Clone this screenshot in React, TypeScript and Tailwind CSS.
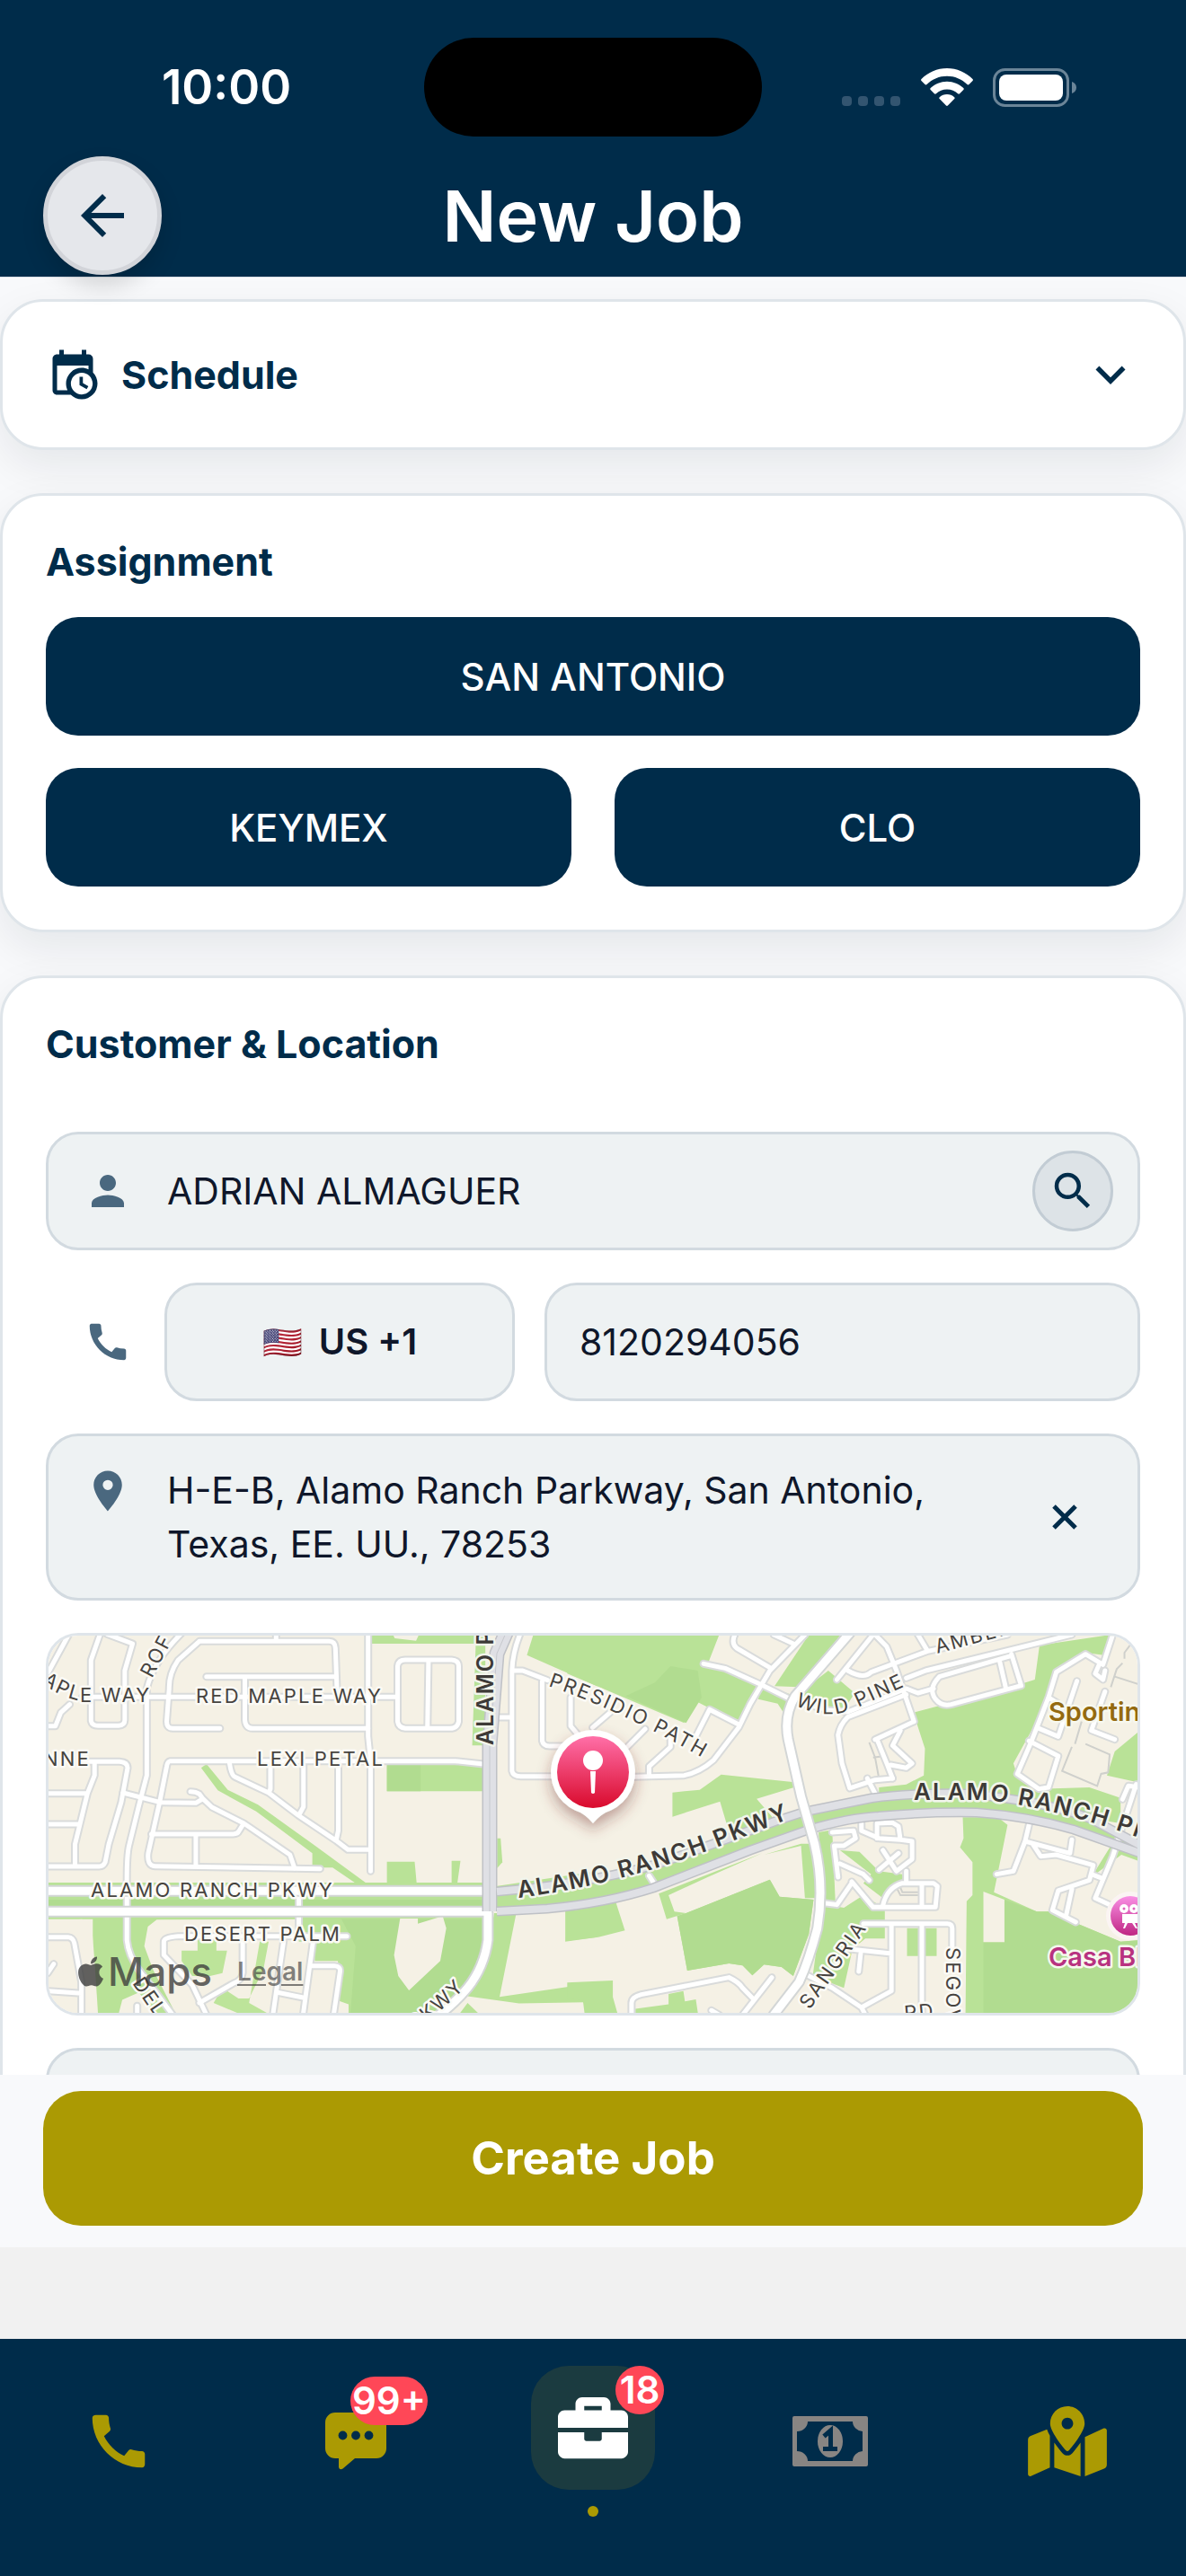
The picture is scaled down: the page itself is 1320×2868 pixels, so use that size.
import { useState } from 'react';
import { FaApple, FaBriefcase, FaMapMarkedAlt } from 'react-icons/fa';
import { MdArrowBack, MdCall, MdExpandMore, MdPerson, MdPlace, MdSearch } from 'react-icons/md';

const TEAMS = ['KEYMEX', 'CLO'];

const CARD = 'rounded-[48px] border-3 border-[#dfe5ea] bg-white shadow-[0_18px_48px_rgba(15,23,42,0.08)]';
const FIELD = 'rounded-[36px] border-3 border-[#d2dae0] bg-[#eef2f3] text-[#0f172a]';

function SignalDots() {
  return (
    <svg className="w-[66px] h-[12px]" viewBox="0 0 66 12" fill="#335570" aria-hidden="true">
      {[0, 18, 36, 54].map((x) => (
        <rect key={x} x={x} width="11" height="11" rx="4" />
      ))}
    </svg>
  );
}

function WifiIcon() {
  return (
    <svg className="w-[58px] h-[43px]" viewBox="0 0 58 43" fill="#fff" aria-hidden="true">
      <path d="M29 0c11 0 21 4.500 28.500 12 .6.600.6 1.400 0 2l-4 4c-.6.600-1.400.6-2 0C45.500 12 37.500 8.700 29 8.700S12.500 12 6.500 18c-.6.600-1.400.6-2 0l-4-4c-.6-.600-.6-1.400 0-2C8 4.500 18 0 29 0z" />
      <path d="M29 14.700c7 0 13.500 2.800 18.300 7.400.6.600.6 1.400 0 2l-4.200 4.200c-.6.600-1.400.6-2 0-3.200-3-7.400-4.900-12.100-4.900s-8.900 1.900-12.100 4.900c-.6.600-1.400.6-2 0l-4.200-4.200c-.6-.600-.6-1.400 0-2C15.500 17.500 22 14.700 29 14.700z" />
      <path d="M29 29c3.200 0 6 1.200 8.200 3.200.6.600.6 1.300 0 1.900l-7.300 7.500c-.6.600-1.300.6-1.900 0l-7.300-7.500c-.6-.600-.6-1.300 0-1.900C23 30.200 25.800 29 29 29z" />
    </svg>
  );
}

function BatteryIcon() {
  return (
    <svg className="w-[93px] h-[43px]" viewBox="0 0 93 43" aria-hidden="true">
      <rect x="1.500" y="1.500" width="82" height="40" rx="12" fill="none" stroke="#6b8598" strokeWidth="3" />
      <rect x="7" y="7" width="71" height="29" rx="8" fill="#fff" />
      <path d="M88 15c3 1 5 3.500 5 6.500S91 27 88 28z" fill="#6b8598" />
    </svg>
  );
}

function CalendarClockIcon() {
  return (
    <svg className="size-[60px]" viewBox="0 0 24 24" fill="currentColor" aria-hidden="true">
      <path d="M15,13H16.5V15.82L18.94,17.23L18.19,18.53L15,16.69V13M19,8H5V19H9.67C9.24,18.09 9,17.07 9,16A7,7 0 0,1 16,9C17.07,9 18.09,9.24 19,9.67V8M5,21C3.89,21 3,20.1 3,19V5C3,3.89 3.89,3 5,3H6V1H8V3H16V1H18V3H19A2,2 0 0,1 21,5V11.1C22.24,12.36 23,14.09 23,16A7,7 0 0,1 16,23C14.09,23 12.36,22.24 11.1,21H5M16,11.15A4.85,4.85 0 0,0 11.15,16C11.15,18.68 13.32,20.85 16,20.85A4.85,4.85 0 0,0 20.85,16C20.85,13.32 18.68,11.15 16,11.15Z" />
    </svg>
  );
}

function CloseIcon() {
  return (
    <svg className="size-12" viewBox="0 0 48 48" stroke="currentColor" strokeWidth="5" aria-hidden="true">
      <path d="M12 12L36 36M36 12L12 36" />
    </svg>
  );
}

function ChatIcon() {
  return (
    <svg className="w-[68px] h-[64px]" viewBox="0 0 68 64" fill="#ab9a03" aria-hidden="true">
      <path d="M11 0h46a11 11 0 0 1 11 11v29a11 11 0 0 1-11 11H33L19.500 62.500Q16 64.500 15 61V51H11A11 11 0 0 1 0 40V11A11 11 0 0 1 11 0z" />
      <g fill="#002c4a">
        <circle cx="19.500" cy="25.500" r="4.900" />
        <circle cx="34" cy="25.500" r="4.900" />
        <circle cx="48.500" cy="25.500" r="4.900" />
      </g>
    </svg>
  );
}

function BillIcon() {
  return (
    <svg className="w-[84px] h-[56px]" viewBox="0 0 84 56" aria-hidden="true">
      <path
        fill="#888583"
        fillRule="evenodd"
        d="M2 0H82Q84 0 84 2V54Q84 56 82 56H2Q0 56 0 54V2Q0 0 2 0zM17 6A12 11 0 0 1 5 17V39A12 11 0 0 1 17 50H67A12 11 0 0 1 78 39V17A12 11 0 0 1 67 6z"
      />
      <ellipse cx="42" cy="28" rx="14" ry="18" fill="#888583" />
      <path d="M34 36.500H50M42.500 36V16L35 22.500" fill="none" stroke="#002c4a" strokeWidth="5" />
    </svg>
  );
}

// Road geometry for the two map tiles, in each tile's own units
const WEST_PARKS = [
  'M945 60H1265V430H1228L1238 90H945z',
  'M1400 60H1580V232L1382 128z',
  'M988 495H1258V583H988z',
  'M465 505L480 492L540 578L625 628L780 760L932 892H902L835 838H778V790L620 650L512 580z',
  'M988 818H1066L1072 895H988z',
  'M1170 815H1195L1185 900H1170z',
  'M1298 740H1308L1313 820L1298 840z',
  'M30 888H1258V1010H30z',
  'M160 990H1258L1255 1100L1215 1230L1110 1330H160z',
  'M1290 990H1352L1305 1270L1580 1222V1287L1360 1292L1215 1268L1258 1180z',
  'M1490 980H1580V1070L1490 1085z',
  'M1215 1290L1250 1330H1190z',
  'M1295 900L1580 850V950L1450 968L1295 975z',
];

const WEST_BLOCKS = [
  'M30 1018L130 1010L158 1045L165 1150L175 1330H30z',
  'M340 1012L740 1010V1085H780L785 1150H850V1282L880 1295V1330H395L330 1180L305 1100L315 1035z',
  'M232 1330L243 1280L290 1255L335 1330z',
  'M1025 1008H1075V1025L1145 1000L1155 1040L1138 1150L1050 1248L1020 1200L1008 1130z',
  'M1005 60H1078L1070 80L1010 72z',
];

const WEST_PATCHES = [
  'M455 1070H508V1115H538L525 1190L490 1200H440L410 1150V1115H455z',
  'M630 1085H655L640 1180L600 1275H570L525 1240L500 1290L580 1330H660L600 1290z',
];

const EAST_PARKS = [
  'M-20 60H370L343 150L385 165L480 225L420 345L345 305L300 275L280 355L-20 190z',
  'M600 60H682L575 235L512 232z',
  'M650 180L718 255L690 310L560 290L600 230z',
  'M470 275L520 290L540 330L555 260L480 225z',
  'M250 587L320 578L375 527L558 552L562 570L466 608L520 690L400 740L372 617L250 668z',
  'M-20 905L200 840L400 740L590 650L780 602L1000 592L1200 630L1450 740V785L1280 710L1030 655L780 665L600 705L450 780L200 905L-20 970z',
  'M868 320L1130 230L1180 210L1192 95L1375 60L1380 80L1365 130L1310 120L1235 185L1180 360L1125 490L1135 530L1190 575L1320 570L1400 605V690L1330 675L1200 620L780 600V570L850 560L895 530L898 440z',
  'M1385 450L1450 380V555L1365 530z',
  'M995 670H1085L1110 695L1075 920L1185 985H1215L1400 1085L1450 1080V1330H1002L1005 950L1020 930V820L988 770L997 740z',
  'M1325 870L1402 795L1450 818V780L1330 730L1375 765z',
  'M-20 985L105 955L128 1048L60 1070L-20 1082z',
  'M215 925L480 790L340 870L240 930L255 985L285 990L235 1010z',
  'M262 1000L285 990L500 878L525 935L612 945L600 1060L560 1200L530 1170L485 1162L455 1198L430 1165L395 1158L288 1182z',
  'M485 795L580 758H620L640 940L590 940L580 765z',
  'M625 720L660 712L668 950L635 950z',
  'M635 960L690 972L740 930L795 975V1075H745L712 1110L690 1240L610 1200z',
  'M680 780L730 785L780 850L840 860L845 885L790 940L740 890L760 860z',
  'M852 1040H928V1133H852z',
  'M-20 1222L97 1215V1270L110 1330H25L20 1280L-20 1275z',
  'M240 1260L278 1250L282 1285L310 1278L316 1330H155V1310L240 1295z',
];

const WEST_STREETS = [
  'M35 185L92 60',
  'M180 60L155 145V348Q158 364 175 364H232Q250 362 250 345V180L272 90L200 58',
  'M95 293L70 320L55 365H30',
  'M410 55Q330 150 312 240V530L290 630L262 765Q255 800 256 900V1080Q260 1130 290 1180L385 1330',
  'M676 60V82M460 82H825Q842 82 843 105L848 268M460 82L400 145Q374 190 375 240L368 350Q368 373 385 373H518',
  'M130 268H1018M480 200H845M588 200V345Q590 373 610 373H935',
  'M935 60V400L942 480V850',
  'M1018 350V165Q1020 144 1040 144H1170Q1190 146 1190 165V350Q1186 373 1165 373H1040Q1020 370 1018 350zM1105 144L1102 373',
  'M1260 492L1180 482H378Q370 484 368 500L348 620L316 790Q312 832 335 833L800 842',
  'M130 484H235Q258 486 258 505L240 620L205 760L195 820Q190 834 178 834H30M165 484V530L145 590L110 760V833M30 590H145M30 693H120',
  'M245 588L350 620L450 622L470 608L460 592Q450 584 435 584M470 608L495 636L585 690L715 795L728 840M585 690L572 715Q568 726 555 726H325M450 726V833',
  'M545 490Q550 530 560 535L655 588L738 663L845 748L878 778H940M660 495V575L655 588M753 495V635L740 663M851 495V715L845 748',
  'M740 916V1066M875 1067H400Q360 1070 360 1085V1130L440 1230L480 1330',
  'M582 1085V1190Q580 1215 555 1225L460 1290M697 1085L667 1330M780 1085L752 1330M775 1166H840Q858 1168 856 1185L838 1330M680 1255L755 1273',
  'M30 1070H90Q105 1072 108 1090L128 1220V1330M30 1250L128 1258M50 1160L33 1190M285 1300V1330',
  'M1362 60Q1342 120 1340 180V515Q1343 533 1365 533H1460M1340 180H1370L1440 212M1425 215V415Q1428 432 1445 432H1490M1505 270V365L1530 400M1295 336H1340',
];

const WEST_AVENUES = ['M30 916H1262', 'M30 985H1262', 'M1272 990V1080Q1262 1170 1215 1240Q1180 1290 1130 1335'];

const EAST_STREETS = [
  'M330 157L385 172L475 225L560 280L650 312L700 318L850 240L880 255L920 240',
  'M700 335Q680 360 675 395L685 490L705 573L770 545L815 540M700 335L850 260',
  'M410 60Q400 90 415 105L500 170M510 60L560 90M590 60L500 180L450 290L420 370L355 480Q320 520 280 530L150 535',
  'M345 310L420 360M345 310L310 400M190 530V500L245 435V410M180 375L130 440M45 370L90 320',
  'M765 60L672 210M770 60L800 100L825 180L870 350L770 410M700 180Q740 210 760 185L905 115L1110 60M880 60L905 115M1275 60L900 180L850 205',
  'M1120 130L935 200Q905 240 925 275Q940 300 965 293L1145 230L1120 125M1090 150L1105 235',
  'M775 410L800 490L815 540M835 380L815 430L865 490L850 505L810 495M750 540L770 590',
  'M1380 60L1355 160L1310 125L1235 185L1215 270L1170 420L1135 525L1190 575L1215 570L1240 465L1165 415M1185 370L1240 400L1288 215M1215 270L1240 290M1360 250L1325 380L1385 410M1345 160L1335 190L1355 210L1360 180',
  'M735 690V715L780 740L835 745L830 700L815 688L775 690V740M835 745L865 750V810L825 850L790 780M830 790L780 845',
  'M660 720L715 715L720 740L690 765H665L675 870M680 825L740 860L755 880M710 885L765 970H925L930 900L920 890H840Q800 905 790 965M890 890V965M850 850V885M710 890L672 962L630 955',
  'M740 1025H955Q968 1025 968 1040V1110M812 1025V1250L735 1305L660 1240L585 1190M890 1025V1330M705 1110L812 1125M733 1125L728 1185M735 1305L745 1330',
  'M1165 695L1155 750L1125 850L1082 860M1155 750L1270 790L1275 745M1175 760L1195 800L1235 795L1330 830L1320 880L1240 915L1225 980L1285 1020M1275 910L1260 1000M1325 860L1355 875',
  'M1440 560L1380 800L1335 940L1385 970M1405 610L1420 565L1450 570',
  'M145 1330V1290Q145 1270 170 1262L395 1205Q420 1220 430 1240L460 1280M505 1205L430 1330M350 1315L370 1330M190 865L205 895',
];

const EAST_AVENUES = ['M705 55L565 265Q535 330 547 410L580 600L615 760Q640 900 622 1040Q600 1150 575 1220L510 1330'];

const EAST_FOOTPATHS = [
  'M1405 155L1390 175L1375 235M1300 350L1283 425M1275 435L1250 515L1340 565L1350 525L1368 520L1372 460L1310 425',
  'M1445 225L1385 200M1430 85L1410 120V140M755 420L770 470L780 540M765 470L795 465',
  'M825 905L835 930H885M835 905L840 920H885',
];

const HIGHWAYS = [
  'M510 -5L499 20L491 122V307',
  'M499 285L540 281Q640 268 690 250L811 206L842 196L916 181Q960 175 1020 176Q1110 184 1160 204L1220 236',
  'M499 307L555 304Q620 298 673 281L781 239L846 216Q890 203 924 201Q980 196 1033 197Q1090 201 1141 216L1220 244',
];

function Roads({ paths, casing, width }: { paths: string[]; casing: string; width: number }) {
  return (
    <g fill="none" strokeLinecap="round" strokeLinejoin="round">
      {paths.map((d) => (
        <path key={'c' + d} d={d} stroke={casing} strokeWidth={width + 4} vectorEffect="non-scaling-stroke" />
      ))}
      {paths.map((d) => (
        <path key={d} d={d} stroke="#ffffff" strokeWidth={width} vectorEffect="non-scaling-stroke" />
      ))}
    </g>
  );
}

function Shapes({ paths, fill }: { paths: string[]; fill: string }) {
  return (
    <g fill={fill}>
      {paths.map((d) => (
        <path key={d} d={d} />
      ))}
    </g>
  );
}

const STREET_LABELS = [
  { id: 'maple-w', d: 'M-8 52Q14 70 42 74H160', text: 'APLE WAY' },
  { id: 'maple', d: 'M164 75H400', text: 'RED MAPLE WAY' },
  { id: 'roft', d: 'M115 48L156 -30', text: 'ROFT' },
  { id: 'nne', d: 'M-6 145H80', text: 'NNE' },
  { id: 'lexi', d: 'M232 145H400', text: 'LEXI PETAL' },
  { id: 'ranch', d: 'M47 291H360', text: 'ALAMO RANCH PKWY' },
  { id: 'desert', d: 'M151 340H360', text: 'DESERT PALM' },
  { id: 'del', d: 'M93 387L150 470', text: 'DEL' },
  { id: 'pkwy', d: 'M408 440Q452 408 484 368', text: 'PKWY' },
  { id: 'presidio', d: 'M556 56Q640 84 745 146', text: 'PRESIDIO PATH' },
  { id: 'amber', d: 'M989 20L1100 -10', text: 'AMBER' },
  { id: 'pine', d: 'M831 77Q868 97 905 78L980 44', text: 'WILD PINE' },
  { id: 'sangria', d: 'M847 417L922 310', text: 'SANGRIA' },
  { id: 'segovia', d: 'M999 347V460', text: 'SEGOVIA' },
  { id: 'rd', d: 'M953 428L1000 424', text: 'RD' },
];

const ROUTE_LABELS = [
  { id: 'route-n', d: 'M495 122V-60', text: 'ALAMO PKWY', size: 25 },
  { id: 'route-w', d: 'M523 292Q630 278 738 238L860 190', text: 'ALAMO RANCH PKWY', size: 26 },
  { id: 'route-e', d: 'M963 183H1040Q1140 192 1300 258', text: 'ALAMO RANCH PKWY', size: 26 },
];

function LocationMap() {
  return (
    <div className="relative h-[426px] overflow-hidden rounded-[36px] border-3 border-[#dfe5ea]">
      <svg
        className="block size-full font-['Inter',sans-serif]"
        viewBox="0 0 1212 420"
        preserveAspectRatio="xMidYMid slice"
        role="img"
        aria-label="Map of the job address"
      >
        <defs>
          <linearGradient id="pin" x1="0" y1="0" x2="0" y2="1">
            <stop offset="0" stopColor="#ff6fa8" />
            <stop offset="1" stopColor="#d90a2c" />
          </linearGradient>
          <linearGradient id="cinema" x1="0" y1="0" x2="0" y2="1">
            <stop offset="0" stopColor="#f98fe4" />
            <stop offset="1" stopColor="#bf2683" />
          </linearGradient>
          <filter id="pinShadow" x="-50%" y="-50%" width="200%" height="200%">
            <feDropShadow dx="0" dy="8" stdDeviation="8" floodColor="#6b2020" floodOpacity="0.4" />
          </filter>
          {[...STREET_LABELS, ...ROUTE_LABELS].map((l) => (
            <path key={l.id} id={l.id} d={l.d} />
          ))}
        </defs>

        <rect width="1212" height="420" fill="#f5f1e5" />

        {/* Parks */}
        <g transform="matrix(0.3954 0 0 0.3333 -14 -21)">
          <Shapes paths={WEST_PARKS} fill="#b9e297" />
          <path d="M988 495H1083V583H988zM30 945H1258V970H30zM860 1010H1258V1100L1215 1230L1110 1330H885L900 1100z" fill="#b1dc90" />
          <Shapes paths={WEST_BLOCKS} fill="#f5f1e5" />
          <Shapes paths={WEST_PATCHES} fill="#bde49a" />
        </g>
        <g transform="matrix(0.4337 0 0 0.3333 586 -21)">
          <Shapes paths={EAST_PARKS} fill="#b9e297" />
          <path d="M245 165L315 180L325 270L285 355L130 265L205 220zM1048 1087H1102V945L1185 985H1215L1400 1085L1450 1080V1330H1048zM262 1000L285 990L500 878L525 935L612 945L600 1060L560 1200L530 1170L485 1162L455 1198L430 1165L395 1158L288 1182z" fill="#b1dc90" />
          <path d="M1048 918L1102 945V1087H1048z" fill="#f5f1e5" />
        </g>

        {/* Roads */}
        <g transform="matrix(0.3954 0 0 0.3333 -14 -21)">
          <Roads paths={WEST_STREETS} casing="#d9dbdb" width={5} />
          <Roads paths={WEST_AVENUES} casing="#d3d6d6" width={9} />
        </g>
        <g transform="matrix(0.4337 0 0 0.3333 586 -21)">
          <g fill="none" stroke="#cfd0cc" strokeWidth="2">
            {EAST_FOOTPATHS.map((d) => (
              <path key={d} d={d} vectorEffect="non-scaling-stroke" />
            ))}
          </g>
          <Roads paths={EAST_STREETS} casing="#d9dbdb" width={5} />
        </g>
        <g fill="none" strokeLinejoin="round">
          {HIGHWAYS.map((d, i) => (
            <path key={d} d={d} stroke="#bfc1c6" strokeWidth={i === 0 ? 17 : 11} />
          ))}
          {HIGHWAYS.map((d, i) => (
            <path key={'f' + d} d={d} stroke="#dfe0e5" strokeWidth={i === 0 ? 14 : 8} />
          ))}
          <path d={HIGHWAYS[0]} stroke="#c6c8cd" strokeWidth="1" />
        </g>
        <g transform="matrix(0.4337 0 0 0.3333 586 -21)">
          <Roads paths={EAST_AVENUES} casing="#d3d6d6" width={9} />
        </g>

        {/* Labels */}
        <g fontSize="22" fontWeight="400" fill="#46433f" stroke="#fbfaf5" strokeWidth="5" strokeLinejoin="round" paintOrder="stroke" className="tracking-widest">
          {STREET_LABELS.map((l) => (
            <text key={l.id}>
              <textPath href={'#' + l.id}>{l.text}</textPath>
            </text>
          ))}
        </g>
        <g fontWeight="600" fill="#3d3a37" stroke="#f2f5ec" strokeWidth="5" strokeLinejoin="round" paintOrder="stroke" className="tracking-wider">
          {ROUTE_LABELS.map((l) => (
            <text key={l.id} fontSize={l.size}>
              <textPath href={'#' + l.id}>{l.text}</textPath>
            </text>
          ))}
        </g>
        <g fontSize="29" fontWeight="600" stroke="#f7f8ee" strokeWidth="5" strokeLinejoin="round" paintOrder="stroke">
          <text x="1113" y="95" fill="#946a10">Sporting</text>
          <text x="1113" y="368" fill="#b83280">Casa Blanca</text>
        </g>

        {/* Cinema marker */}
        <circle cx="1204" cy="312" r="27" fill="#fbf4f3" />
        <circle cx="1204" cy="312" r="22" fill="url(#cinema)" />
        <g fill="#fff">
          <path d="M1195 310h17v10h-17zM1198 320h3l-3 6h-2zM1206 320h3l3 6h-2z" />
          <circle cx="1197" cy="304" r="5" />
          <circle cx="1208" cy="304" r="5" />
        </g>
        <circle cx="1197" cy="304" r="1.500" fill="#dc62bb" />
        <circle cx="1208" cy="304" r="1.500" fill="#dc62bb" />

        {/* Job pin */}
        <path d="M606 105a47 47 0 0 1 20 89.500Q615 198 606 209Q597 198 586 194.500A47 47 0 0 1 606 105z" fill="#fff" filter="url(#pinShadow)" />
        <circle cx="606" cy="152" r="40" fill="url(#pin)" />
        <circle cx="606" cy="139" r="11" fill="#fff" />
        <path d="M603 151h6l-1 24q-2 2-4 0z" fill="#fff" />
      </svg>

      {/* Attribution */}
      <div className="absolute left-7 bottom-4 flex items-center gap-7 text-[#3c3c3c]/80">
        <span className="flex items-center text-[44px] leading-[60px] font-medium">
          <FaApple className="size-[38px]" aria-hidden="true" />
          Maps
        </span>
        <a href="#legal" className="text-[28px] leading-[60px] font-semibold underline underline-offset-4 text-[#3c3c3c]/65">
          Legal
        </a>
      </div>
    </div>
  );
}

function CountBadge({ count, className }: { count: string; className: string }) {
  return (
    <span className={`absolute flex h-[54px] min-w-[54px] items-center justify-center rounded-full bg-[#ff4757] text-[42px] leading-[54px] font-semibold text-white ${className}`}>
      {count}
    </span>
  );
}

export default function App() {
  const [scheduleOpen, setScheduleOpen] = useState(false);
  const [customer, setCustomer] = useState('ADRIAN ALMAGUER');
  const [phone, setPhone] = useState('8120294056');
  const [address, setAddress] = useState('H-E-B, Alamo Ranch Parkway, San Antonio, Texas, EE. UU., 78253');

  return (
    <div className="flex h-screen flex-col bg-[#f8f9fb] font-['Inter',sans-serif] text-[#002c4a]">
      {/* Header */}
      <header className="relative z-10 shrink-0 border-b border-[#dcdfe6] bg-[#002c4a] pt-[42px] text-white">
        <div className="grid grid-cols-[1fr_376px_1fr] items-center">
          <span className="pl-8 text-center text-[53px] leading-[60px] font-semibold">10:00</span>
          <span className="h-[110px] rounded-full bg-black" />
          <div className="flex items-end justify-end gap-[22px] pr-[122px]">
            <SignalDots />
            <WifiIcon />
            <BatteryIcon />
          </div>
        </div>
        <div className="mt-[22px] mb-[2px] grid grid-cols-[132px_1fr_132px] items-center px-12">
          <button
            type="button"
            aria-label="Back"
            className="flex size-[132px] items-center justify-center rounded-full border-5 border-[#d2d4d9] bg-[#e5e7eb] text-[#002c4a] shadow-[0_12px_24px_rgba(0,0,0,0.15)]"
          >
            <MdArrowBack className="size-[72px]" />
          </button>
          <h1 className="text-center text-[79px] leading-[96px] font-semibold">New Job</h1>
        </div>
      </header>

      {/* Form */}
      <main className="flex min-h-0 flex-1 flex-col gap-12 overflow-y-auto pt-6 [scrollbar-width:none] *:shrink-0">
        <section className={`${CARD} px-12`}>
          <button
            type="button"
            aria-expanded={scheduleOpen}
            onClick={() => setScheduleOpen(!scheduleOpen)}
            className="flex w-full items-center gap-6 py-12 text-[43px] leading-[66px] font-bold"
          >
            <CalendarClockIcon />
            <span className="flex-1 text-left">Schedule</span>
            <MdExpandMore className="size-[66px]" />
          </button>
        </section>

        <section className={`${CARD} p-12`}>
          <h2 className="text-[43px] leading-[51px] font-bold">Assignment</h2>
          <div className="mt-9 grid grid-cols-2 gap-x-12 gap-y-9 text-[42px] font-medium text-white">
            <button type="button" className="col-span-2 h-[132px] rounded-[36px] bg-[#002c4a]">
              SAN ANTONIO
            </button>
            {TEAMS.map((team) => (
              <button key={team} type="button" className="h-[132px] rounded-[36px] bg-[#002c4a]">
                {team}
              </button>
            ))}
          </div>
        </section>

        <section className={`${CARD} p-12`}>
          <h2 className="text-[43px] leading-[51px] font-bold">Customer &amp; Location</h2>

          <div className="mt-[72px] flex flex-col gap-9 text-[41px] leading-[60px]">
            <div className={`${FIELD} flex h-[132px] items-center pr-[27px] pl-[39px]`}>
              <label htmlFor="customer" className="w-[93px] text-[#4a687f]">
                <MdPerson className="size-[54px]" aria-label="Customer" />
              </label>
              <input
                id="customer"
                value={customer}
                onChange={(e) => setCustomer(e.target.value)}
                className="min-w-0 flex-1 bg-transparent outline-none"
              />
              <button
                type="button"
                aria-label="Search customer"
                className="flex size-[90px] items-center justify-center rounded-full border-3 border-[#c2ccd4] bg-[#dde3e7] text-[#002c4a]"
              >
                <MdSearch className="size-[54px]" />
              </button>
            </div>

            <div className="flex h-[132px] items-center">
              <label htmlFor="phone" className="w-[132px] pl-[42px] text-[#4a687f]">
                <MdCall className="size-[54px]" aria-label="Phone" />
              </label>
              <button
                type="button"
                aria-label="Country code"
                className={`${FIELD} mr-[33px] flex h-full w-[390px] items-center justify-center gap-[18px] text-[40px] font-semibold`}
              >
                <span className="text-[36px]">🇺🇸</span>
                US +1
              </button>
              <input
                id="phone"
                type="tel"
                value={phone}
                onChange={(e) => setPhone(e.target.value)}
                className={`${FIELD} h-full min-w-0 flex-1 px-9 outline-none`}
              />
            </div>

            <div className={`${FIELD} flex py-[30px] pr-[57px] pl-[39px]`}>
              <label htmlFor="address" className="w-[93px] pt-1 text-[#4a687f]">
                <MdPlace className="size-[54px]" aria-label="Address" />
              </label>
              <textarea
                id="address"
                rows={2}
                value={address}
                onChange={(e) => setAddress(e.target.value)}
                className="block min-w-0 flex-1 resize-none overflow-hidden bg-transparent outline-none"
              />
              <button
                type="button"
                aria-label="Clear address"
                onClick={() => setAddress('')}
                className="ml-9 text-[#002c4a]"
              >
                <CloseIcon />
              </button>
            </div>

            <LocationMap />

            <textarea aria-label="Notes" rows={2} className={`${FIELD} block w-full resize-none px-9 py-[30px] outline-none`} />
          </div>
        </section>
      </main>

      {/* Submit */}
      <footer className="relative shrink-0 bg-[#f8f9fb] px-12 pt-[18px] pb-6">
        <button type="button" className="h-[150px] w-full rounded-[42px] bg-[#ab9a03] text-[51px] font-bold text-white">
          Create Job
        </button>
      </footer>
      <div className="h-[102px] shrink-0 bg-[#f1f1f1]" />

      {/* Tab bar */}
      <nav className="grid shrink-0 grid-cols-5 bg-[#002c4a] pb-9 text-[#ab9a03]">
        <a href="#calls" aria-label="Calls" className="flex h-[228px] items-center justify-center">
          <MdCall className="size-[78px]" />
        </a>
        <a href="#messages" aria-label="Messages" className="flex h-[228px] items-center justify-center">
          <span className="relative">
            <ChatIcon />
            <CountBadge count="99+" className="-top-10 left-7 px-[2px]" />
          </span>
        </a>
        <a href="#jobs" aria-label="Jobs" aria-current="page" className="flex h-[228px] flex-col items-center justify-center gap-[18px]">
          <span className="relative flex size-[138px] items-center justify-center rounded-[42px] bg-[#1b3b40] text-white">
            <FaBriefcase className="size-[78px]" />
            <CountBadge count="18" className="top-0 -right-[10px]" />
          </span>
          <span className="size-3 rounded-full bg-[#ab9a03]" />
        </a>
        <a href="#payments" aria-label="Payments" className="flex h-[228px] items-center justify-center">
          <BillIcon />
        </a>
        <a href="#map" aria-label="Map" className="flex h-[228px] items-center justify-center">
          <FaMapMarkedAlt className="h-[78px] w-[88px]" />
        </a>
      </nav>
    </div>
  );
}
